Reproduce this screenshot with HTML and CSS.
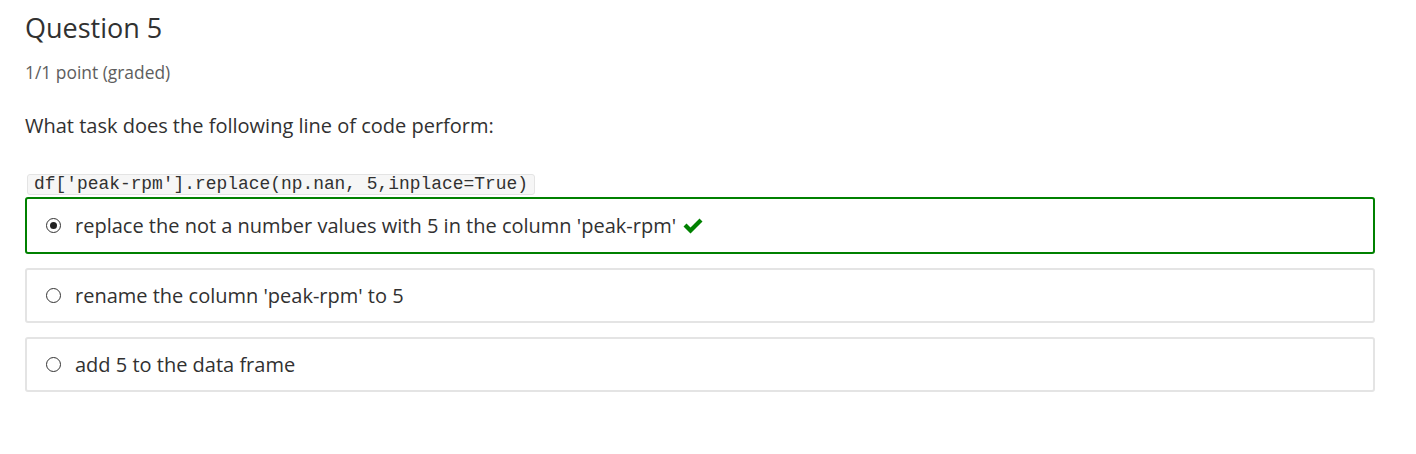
FILE: index.html
```html
<!DOCTYPE html>
<html>
<head>
<meta charset="utf-8">
<link rel="stylesheet" href="styles.css">
</head>
<body>
<div class="problem">
  <h3 class="title">Question 5</h3>
  <div class="meta">1/1 point (graded)</div>
  <p class="prompt">What task does the following line of code perform:</p>
  <div class="code-line"><code class="code">df['peak-rpm'].replace(np.nan, 5,inplace=True)</code></div>
  <div class="choices">
    <label class="choice correct">
      <span class="radio checked"></span>
      <span class="choice-text">replace the not a number values with 5 in the column 'peak-rpm'</span>
      <svg class="check" width="22" height="18" viewBox="0 0 22 18"><path d="M1.5 9.5 L4.5 6.5 L8.5 10.5 L17.5 1.5 L20.5 4.5 L8.5 16.5 Z" fill="#008100"/></svg>
    </label>
    <label class="choice">
      <span class="radio"></span>
      <span class="choice-text">rename the column 'peak-rpm' to 5</span>
    </label>
    <label class="choice">
      <span class="radio"></span>
      <span class="choice-text">add 5 to the data frame</span>
    </label>
  </div>
</div>
</body>
</html>
```
FILE: styles.css
```css
html, body {
  margin: 0;
  padding: 0;
  background: #fff;
}
body {
  font-family: "Open Sans", "Noto Sans", sans-serif;
  color: #313131;
}
.problem {
  padding: 8px 41px 0 25px;
}
.title {
  margin: 0;
  font-size: 27px;
  font-weight: 400;
  line-height: 40px;
  color: #313131;
}
.meta {
  margin-top: 13px;
  font-size: 17.4px;
  line-height: 22px;
  color: #5e5e5e;
}
.prompt {
  margin: 29px 0 0 0;
  font-size: 20px;
  line-height: 28px;
  color: #313131;
}
.code-line {
  margin-top: 34px;
  display: flex;
}
.code {
  margin-left: 2px;
  font-family: "Liberation Mono", "Courier New", monospace;
  font-size: 17.9px;
  line-height: 19px;
  padding: 0 6px;
  background: #f6f6f6;
  border: 1px solid #e4e4e4;
  border-radius: 3px;
  color: #313131;
}
.choices {
  margin-top: 2px;
  display: flex;
  flex-direction: column;
  gap: 14px;
}
.choice {
  display: flex;
  align-items: center;
  height: 55px;
  box-sizing: border-box;
  border: 2px solid #e4e4e4;
  border-radius: 3px;
  padding-left: 19px;
  font-size: 20px;
  color: #313131;
}
.choice.correct {
  height: 57px;
  border-color: #008100;
}
.radio {
  width: 15px;
  height: 15px;
  box-sizing: border-box;
  border: 1.5px solid #333;
  border-radius: 50%;
  margin-right: 14px;
  position: relative;
  flex: none;
}
.radio.checked::after {
  content: "";
  position: absolute;
  left: 2.5px;
  top: 2.5px;
  width: 7px;
  height: 7px;
  border-radius: 50%;
  background: #222;
}
.check {
  margin-left: 6px;
}
```
